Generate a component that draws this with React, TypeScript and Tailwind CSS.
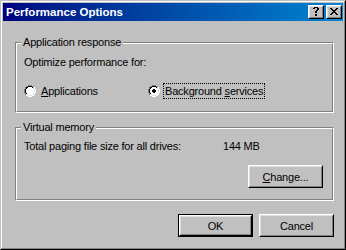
const RADIO = [
  "....OOOO....",
  "..OOIIIIOO..",
  ".OIIFFFFIIO.",
  ".OIFFFFFFIO.",
  "OIFFFFFFFFIO",
  "OIFFFFFFFFIO",
  "OIFFFFFFFFIO",
  "OIFFFFFFFFIO",
  ".OIFFFFFFIO.",
  ".OIIFFFFIIO.",
  "..OOIIIIOO..",
  "....OOOO....",
];

const DOT = ["....", "....", "....", "....", ".##.", "####", "####", ".##."];

function pixelColor(ch: string, r: number, c: number) {
  const tl = r + c < 11;
  if (ch === "O") return tl ? "#808080" : "#ffffff";
  if (ch === "I") return tl ? "#000000" : "#dfdfdf";
  if (ch === "F") return "#ffffff";
  return null;
}

function Radio({ checked }: { checked?: boolean }) {
  const rects: JSX.Element[] = [];
  RADIO.forEach((row, r) =>
    row.split("").forEach((ch, c) => {
      const fill = pixelColor(ch, r, c);
      if (fill) rects.push(<rect key={`${r}-${c}`} x={c} y={r} width={1} height={1} fill={fill} />);
    })
  );
  if (checked) {
    DOT.forEach((row, r) =>
      row.split("").forEach((ch, c) => {
        if (ch === "#") rects.push(<rect key={`d${r}-${c}`} x={c + 4} y={r} width={1} height={1} fill="#000" />);
      })
    );
  }
  return (
    <svg width="12" height="12" viewBox="0 0 12 12" shapeRendering="crispEdges" className="shrink-0">
      {rects}
    </svg>
  );
}

function Glyph({ rows, x, y }: { rows: string[]; x: number; y: number }) {
  return (
    <svg width="16" height="14" viewBox="0 0 16 14" shapeRendering="crispEdges" className="absolute left-0 top-0">
      {rows.flatMap((row, r) =>
        row.split("").map((ch, c) =>
          ch === "#" ? <rect key={`${r}-${c}`} x={x + c} y={y + r} width={1} height={1} fill="#000" /> : null
        )
      )}
    </svg>
  );
}

const CLOSE = ["##....##", ".##..##.", "..####..", "...##...", "..####..", ".##..##.", "##....##"];
const HELP = [".####.", "##..##", "....##", "...##.", "..##..", "..##..", "......", "..##..", "..##.."];

function CaptionButton({ rows, x, y }: { rows: string[]; x: number; y: number }) {
  return (
    <div className="h-[14px] w-[16px] border border-t-white border-l-white border-r-black border-b-black bg-[#c0c0c0]">
      <div className="relative h-full w-full border border-t-[#dfdfdf] border-l-[#dfdfdf] border-r-[#808080] border-b-[#808080]">
        <div className="absolute -left-[2px] -top-[2px]">
          <Glyph rows={rows} x={x} y={y} />
        </div>
      </div>
    </div>
  );
}

function Button({ children, isDefault }: { children: React.ReactNode; isDefault?: boolean }) {
  const face = (
    <div className="flex h-full w-full items-center justify-center border border-t-[#dfdfdf] border-l-[#dfdfdf] border-r-[#808080] border-b-[#808080] pt-[1px]">
      {children}
    </div>
  );
  if (isDefault) {
    return (
      <div className="h-[23px] w-[75px] border border-black bg-[#c0c0c0]">
        <div className="h-full w-full border border-t-white border-l-white border-r-black border-b-black">{face}</div>
      </div>
    );
  }
  return (
    <div className="h-[23px] w-[75px] border border-t-white border-l-white border-r-black border-b-black bg-[#c0c0c0]">
      {face}
    </div>
  );
}

function GroupBox({ label, className, children }: { label: string; className: string; children: React.ReactNode }) {
  return (
    <div className={`relative border border-t-[#808080] border-l-[#808080] border-r-white border-b-white ${className}`}>
      <div className="h-full w-full border border-t-white border-l-white border-r-[#808080] border-b-[#808080]">
        {children}
      </div>
      <span className="absolute -top-[7px] left-[5px] bg-[#c0c0c0] px-[2px] leading-[13px]">{label}</span>
    </div>
  );
}

export default function App() {
  return (
    <div className="h-[250px] w-[346px] border border-t-[#c0c0c0] border-l-[#c0c0c0] border-r-black border-b-black bg-[#c0c0c0] font-['Liberation_Sans',Arial,sans-serif] text-[11px] leading-[13px] tracking-[-0.2px] text-black">
      <div className="h-full w-full border border-t-white border-l-white border-r-[#808080] border-b-[#808080] p-[1px]">
        <div className="flex h-[18px] items-center bg-gradient-to-r from-[#000080] to-[#1084d0] pl-[3px] pr-[1px]">
          <span className="flex-1 text-[11.5px] font-bold tracking-normal text-white">Performance Options</span>
          <div className="flex gap-[2px]">
            <CaptionButton rows={HELP} x={5} y={2} />
            <CaptionButton rows={CLOSE} x={4} y={3} />
          </div>
        </div>

        <div className="pl-[12px] pr-[9px] pt-[21px]">
          <GroupBox label="Application response" className="h-[71px]">
            <div className="pl-[7px] pt-[12px]">
              <p>Optimize performance for:</p>
              <div className="mt-[14px] flex h-[16px] items-center">
                <label className="flex w-[124px] items-center">
                  <Radio />
                  <span className="ml-[3px] border border-transparent px-[1px] pt-[1px] leading-[13px]">
                    <u>A</u>pplications
                  </span>
                </label>
                <label className="flex items-center">
                  <Radio checked />
                  <span className="ml-[3px] border border-dotted border-black px-[1px] pt-[1px] leading-[13px]">
                    Background <u>s</u>ervices
                  </span>
                </label>
              </div>
            </div>
          </GroupBox>

          <GroupBox label="Virtual memory" className="mt-[14px] h-[74px]">
            <div className="pl-[7px] pr-[9px] pt-[11px]">
              <div className="flex">
                <span className="w-[199px]">Total paging file size for all drives:</span>
                <span>144 MB</span>
              </div>
              <div className="mt-[12px] flex justify-end">
                <Button>
                  <span>
                    <u>C</u>hange...
                  </span>
                </Button>
              </div>
            </div>
          </GroupBox>

          <div className="mt-[13px] flex justify-end gap-[6px]">
            <Button isDefault>OK</Button>
            <Button>Cancel</Button>
          </div>
        </div>
      </div>
    </div>
  );
}
